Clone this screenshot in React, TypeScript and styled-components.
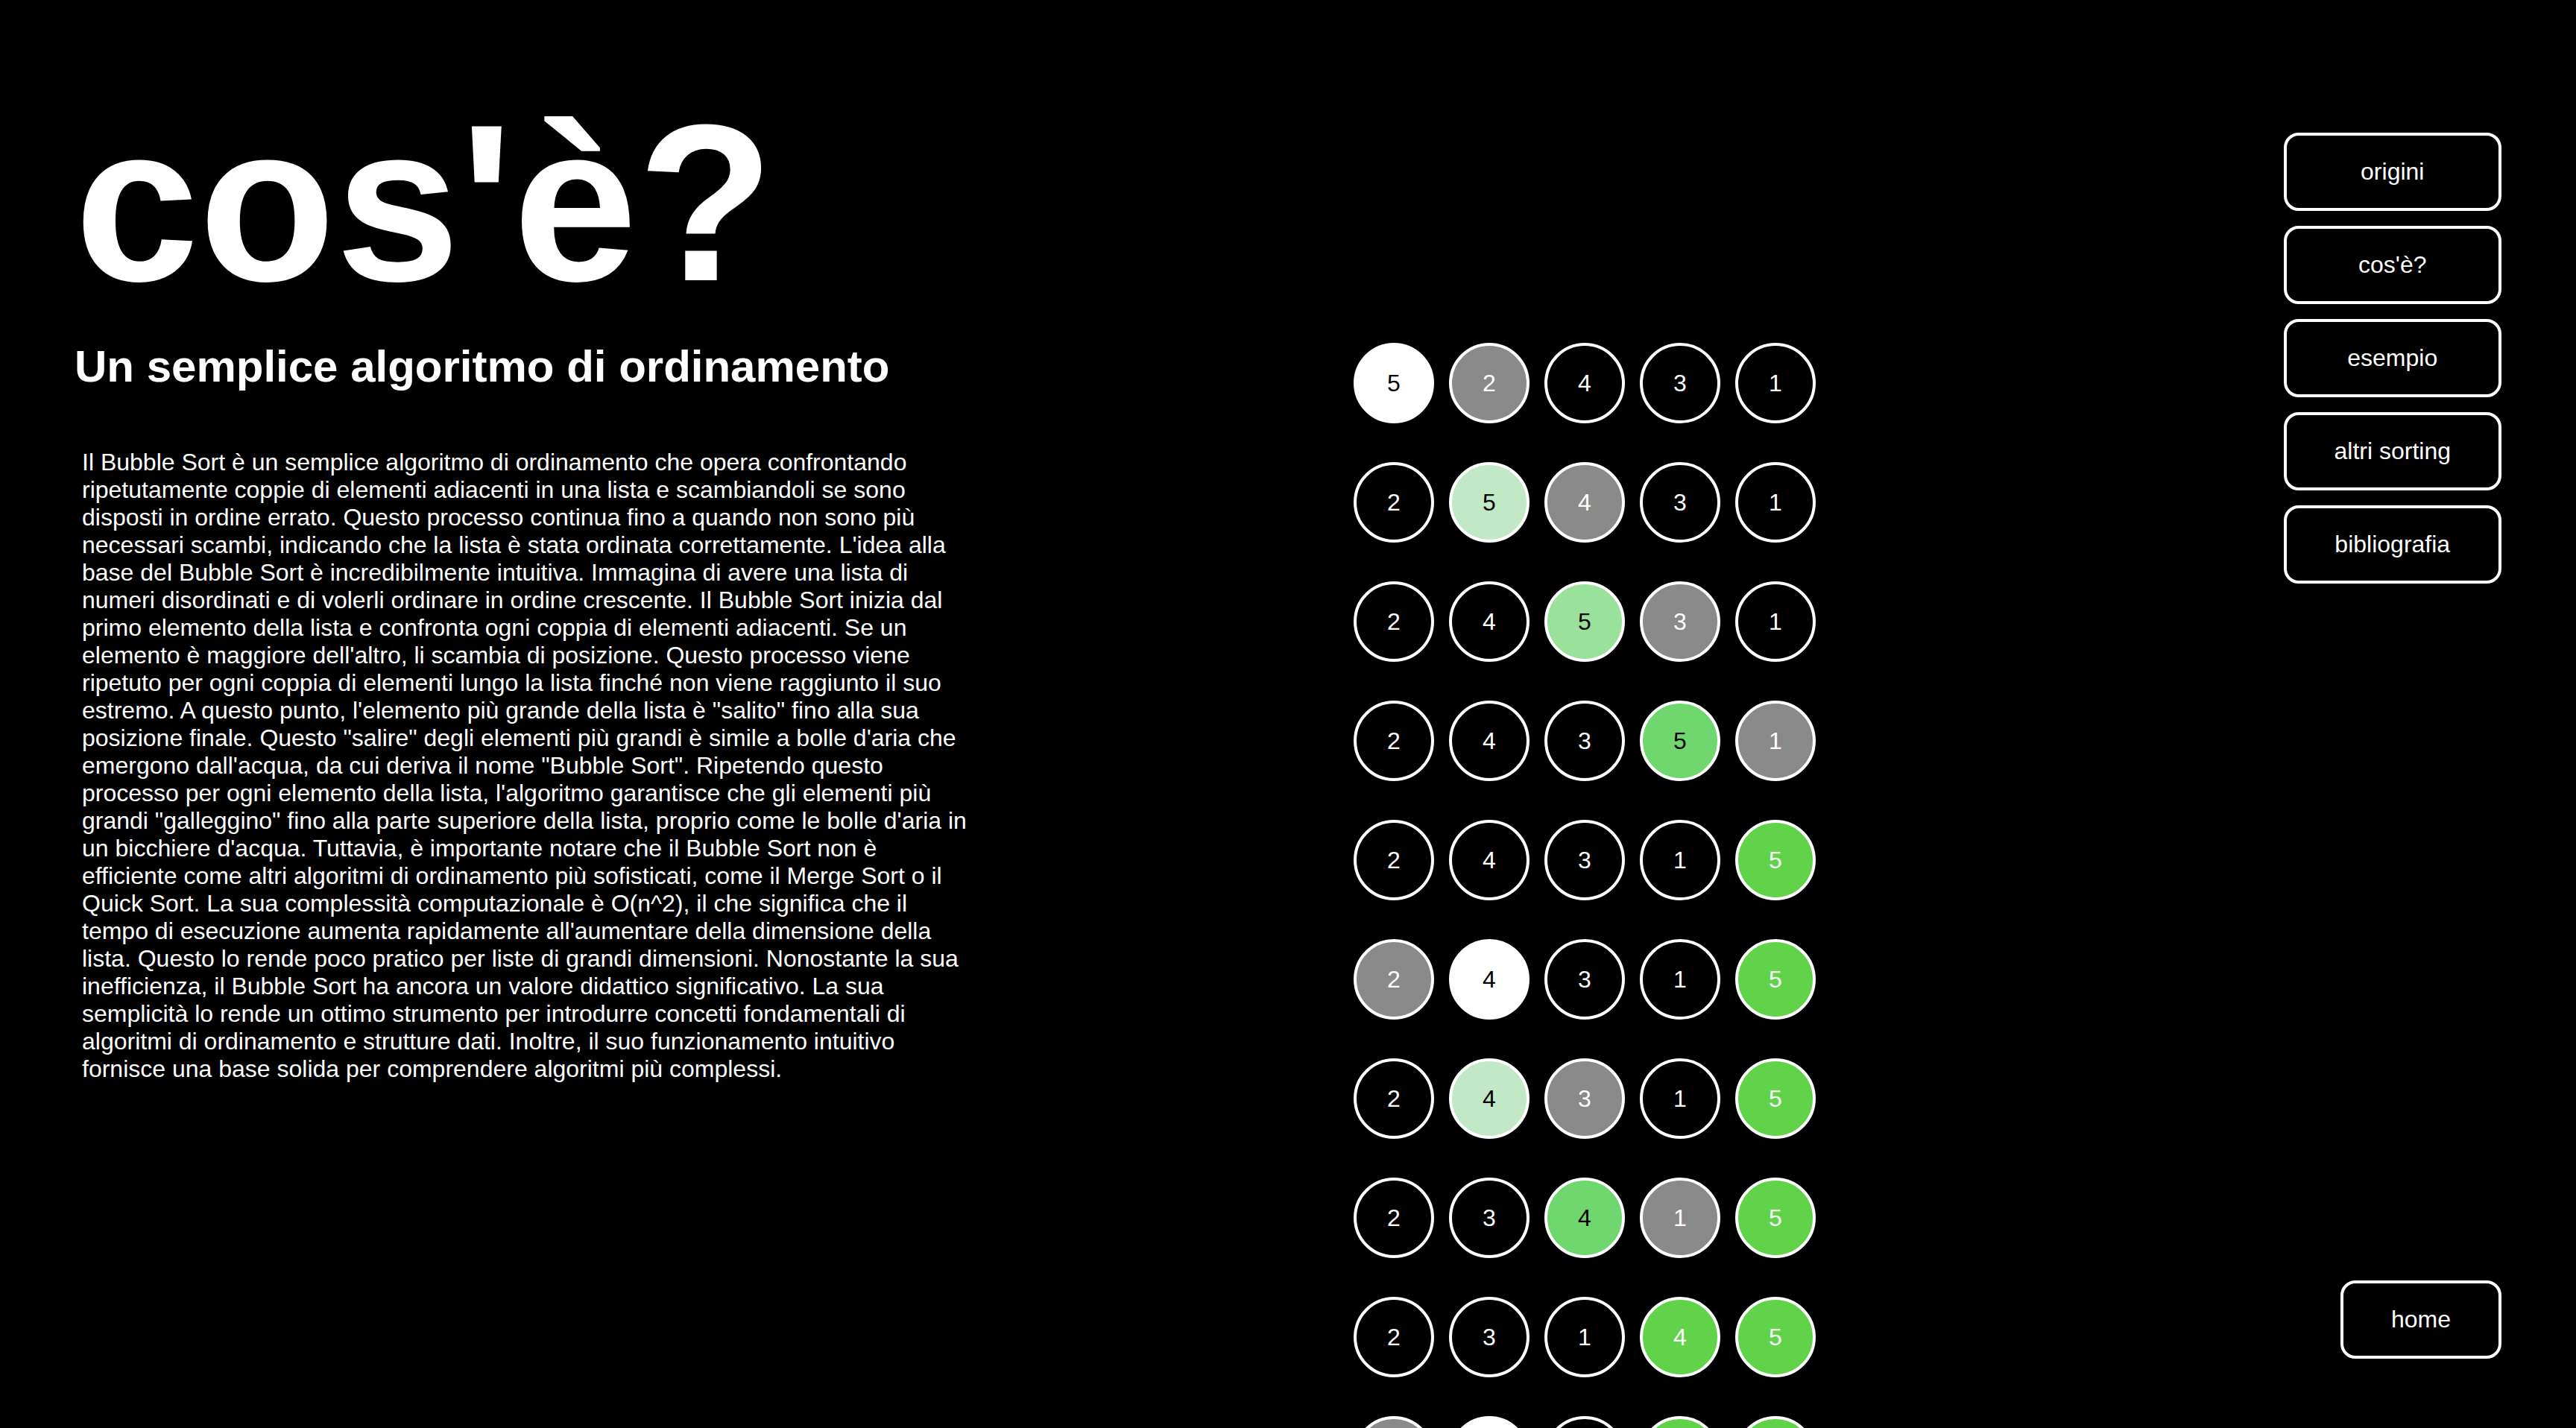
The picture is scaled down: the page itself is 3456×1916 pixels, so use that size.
import React from "react";
import styled, { createGlobalStyle } from "styled-components";

const GlobalStyle = createGlobalStyle`
  *, *::before, *::after {
    box-sizing: border-box;
  }

  body {
    margin: 0;
    background: #000;
    color: #fff;
    font-family: "Liberation Sans", Arial, Helvetica, sans-serif;
    font-size: 32px;
    line-height: 37px;
  }
`;

const Page = styled.div`
  display: grid;
  grid-template-columns: 1fr 1fr;
  height: 100vh;
  padding: 0 100px;
  overflow: hidden;
`;

const Article = styled.article`
  padding-top: 122px;
`;

const Title = styled.h1`
  margin: 0;
  font-size: 300px;
  line-height: 300px;
`;

const Subtitle = styled.h2`
  margin: 36px 0 0;
  font-size: 60px;
  line-height: 68px;
`;

const Body = styled.p`
  max-width: 1210px;
  margin: 76px 0 0;
  padding-left: 10px;
`;

const Side = styled.div`
  display: flex;
  justify-content: space-between;
  height: 100vh;
`;

const Steps = styled.ol`
  display: flex;
  flex-direction: column;
  gap: 52px;
  margin: 0;
  padding: 460px 0 0 88px;
  list-style: none;
`;

const Step = styled.li`
  display: flex;
  gap: 20px;
`;

type Tone = "plain" | "start" | "compared" | "light" | "medium" | "strong" | "sorted";

const fills: Record<Tone, string> = {
  plain: "#000",
  start: "#fff",
  compared: "#8a8a8a",
  light: "#c2e9c6",
  medium: "#9ae29b",
  strong: "#70d76e",
  sorted: "#61d34a",
};

const darkText: Tone[] = ["start", "light", "medium", "strong"];

const Ball = styled.span<{ $tone: Tone }>`
  display: flex;
  flex: none;
  align-items: center;
  justify-content: center;
  width: 108px;
  height: 108px;
  border: 4px solid #fff;
  border-radius: 50%;
  background: ${({ $tone }) => fills[$tone]};
  color: ${({ $tone }) => (darkText.includes($tone) ? "#000" : "#fff")};
`;

const Controls = styled.div`
  display: flex;
  flex-direction: column;
  align-items: flex-end;
  justify-content: space-between;
  padding: 178px 0 93px;
`;

const Menu = styled.nav`
  display: flex;
  flex-direction: column;
  gap: 20px;
`;

const MenuLink = styled.a`
  padding: 30px 64px;
  border: 4px solid #fff;
  border-radius: 20px;
  background: #000;
  color: #fff;
  text-align: center;
  text-decoration: none;
  white-space: nowrap;
`;

type Cell = [number, Tone];

const steps: Cell[][] = [
  [[5, "start"], [2, "compared"], [4, "plain"], [3, "plain"], [1, "plain"]],
  [[2, "plain"], [5, "light"], [4, "compared"], [3, "plain"], [1, "plain"]],
  [[2, "plain"], [4, "plain"], [5, "medium"], [3, "compared"], [1, "plain"]],
  [[2, "plain"], [4, "plain"], [3, "plain"], [5, "strong"], [1, "compared"]],
  [[2, "plain"], [4, "plain"], [3, "plain"], [1, "plain"], [5, "sorted"]],
  [[2, "compared"], [4, "start"], [3, "plain"], [1, "plain"], [5, "sorted"]],
  [[2, "plain"], [4, "light"], [3, "compared"], [1, "plain"], [5, "sorted"]],
  [[2, "plain"], [3, "plain"], [4, "strong"], [1, "compared"], [5, "sorted"]],
  [[2, "plain"], [3, "plain"], [1, "plain"], [4, "sorted"], [5, "sorted"]],
  [[2, "compared"], [3, "start"], [1, "plain"], [4, "sorted"], [5, "sorted"]],
];

const links = [
  { label: "origini", href: "#origini" },
  { label: "cos'è?", href: "#cose" },
  { label: "esempio", href: "#esempio" },
  { label: "altri sorting", href: "#altri-sorting" },
  { label: "bibliografia", href: "#bibliografia" },
];

export default function App() {
  return (
    <>
      <GlobalStyle />
      <Page lang="it">
        <Article id="cose">
          <Title>cos'è?</Title>
          <Subtitle>Un semplice algoritmo di ordinamento</Subtitle>
          <Body>
            Il Bubble Sort è un semplice algoritmo di ordinamento che opera
            confrontando ripetutamente coppie di elementi adiacenti in una lista
            e scambiandoli se sono disposti in ordine errato. Questo processo
            continua fino a quando non sono più necessari scambi, indicando che
            la lista è stata ordinata correttamente. L'idea alla base del Bubble
            Sort è incredibilmente intuitiva. Immagina di avere una lista di
            numeri disordinati e di volerli ordinare in ordine crescente. Il
            Bubble Sort inizia dal primo elemento della lista e confronta ogni
            coppia di elementi adiacenti. Se un elemento è maggiore dell'altro,
            li scambia di posizione. Questo processo viene ripetuto per ogni
            coppia di elementi lungo la lista finché non viene raggiunto il suo
            estremo. A questo punto, l'elemento più grande della lista è
            "salito" fino alla sua posizione finale. Questo "salire" degli
            elementi più grandi è simile a bolle d'aria che emergono dall'acqua,
            da cui deriva il nome "Bubble Sort". Ripetendo questo processo per
            ogni elemento della lista, l'algoritmo garantisce che gli elementi
            più grandi "galleggino" fino alla parte superiore della lista,
            proprio come le bolle d'aria in un bicchiere d'acqua. Tuttavia, è
            importante notare che il Bubble Sort non è efficiente come altri
            algoritmi di ordinamento più sofisticati, come il Merge Sort o il
            Quick Sort. La sua complessità computazionale è O(n^2), il che
            significa che il tempo di esecuzione aumenta rapidamente
            all'aumentare della dimensione della lista. Questo lo rende poco
            pratico per liste di grandi dimensioni. Nonostante la sua
            inefficienza, il Bubble Sort ha ancora un valore didattico
            significativo. La sua semplicità lo rende un ottimo strumento per
            introdurre concetti fondamentali di algoritmi di ordinamento e
            strutture dati. Inoltre, il suo funzionamento intuitivo fornisce una
            base solida per comprendere algoritmi più complessi.
          </Body>
        </Article>

        <Side>
          <Steps>
            {steps.map((cells, row) => (
              <Step key={row}>
                {cells.map(([value, tone]) => (
                  <Ball key={value} $tone={tone}>
                    {value}
                  </Ball>
                ))}
              </Step>
            ))}
          </Steps>

          <Controls>
            <Menu>
              {links.map(({ label, href }) => (
                <MenuLink key={href} href={href}>
                  {label}
                </MenuLink>
              ))}
            </Menu>
            <MenuLink href="#home">home</MenuLink>
          </Controls>
        </Side>
      </Page>
    </>
  );
}
